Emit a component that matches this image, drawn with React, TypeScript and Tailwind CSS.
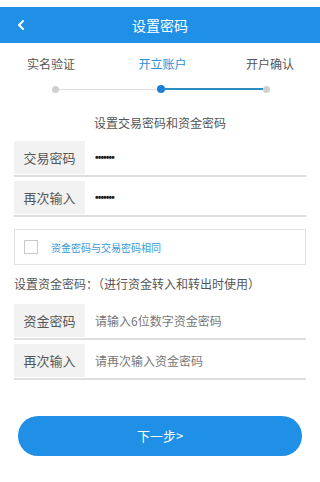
import { ChevronLeft } from 'lucide-react';

const font = { fontFamily: '"Noto Sans CJK SC", "Noto Sans", sans-serif' };

function Field({ label, value, placeholder }: { label: string; value?: string; placeholder?: string }) {
  return (
    <div className="flex items-stretch border-b-2 border-[#dedede] pb-[1px]">
      <div className="w-[71px] h-[33px] bg-[#f2f2f2] flex items-center justify-center text-[13px] text-[#555]">
        {label}
      </div>
      <div className="flex-1 flex items-center pl-[10px] text-[12px]">
        {value ? (
          <span className="text-[#222] text-[10px] tracking-[-0.8px] font-bold" style={{ fontFamily: '"Liberation Sans", sans-serif' }}>
            {value}
          </span>
        ) : (
          <span className="text-[#777]">{placeholder}</span>
        )}
      </div>
    </div>
  );
}

export default function App() {
  return (
    <div className="w-[320px] h-[482px] bg-white flex flex-col overflow-hidden" style={font}>
      {/* Header */}
      <div className="mt-[7px] h-[36px] bg-[#1f90e6] flex items-center relative shrink-0">
        <ChevronLeft size={16} strokeWidth={3} className="text-white ml-[13px]" />
        <div className="absolute inset-0 flex items-center justify-center text-white text-[14px]">设置密码</div>
      </div>

      {/* Steps */}
      <div className="flex justify-between px-[27px] mt-[12px] text-[12px] text-[#555]">
        <span>实名验证</span>
        <span className="text-[#2a8fd6] ml-[4px]">开立账户</span>
        <span className="-mr-[1px]">开户确认</span>
      </div>
      <div className="flex items-center mt-[12px] pl-[52px] pr-[50px]">
        <div className="w-[7px] h-[7px] rounded-full bg-[#cfcfcf]" />
        <div className="flex-1 h-[1px] bg-[#dddddd]" />
        <div className="w-[8px] h-[8px] rounded-full bg-[#1c7fd6]" />
        <div className="flex-1 h-[2px] bg-[#2b8fc2]" />
        <div className="w-[7px] h-[7px] rounded-full bg-[#cfcfcf]" />
      </div>

      <div className="text-center text-[12px] text-[#555] mt-[21px]">设置交易密码和资金密码</div>

      <div className="mx-[14px] mt-[9px] flex flex-col gap-[4px]">
        <Field label="交易密码" value="•••••••" />
        <Field label="再次输入" value="•••••••" />
      </div>

      <div className="mx-[14px] mt-[12px] h-[36px] border border-[#e3e3e3] flex items-center pl-[9px]">
        <div className="w-[14px] h-[14px] border border-[#c8c8c8] bg-white" />
        <span className="ml-[13px] text-[10px] text-[#3b9ad6]">资金密码与交易密码相同</span>
      </div>

      <div className="mx-[14px] mt-[10px] text-[12px] text-[#555]">设置资金密码：（进行资金转入和转出时使用）</div>

      <div className="mx-[14px] mt-[11px] flex flex-col gap-[4px]">
        <Field label="资金密码" placeholder="请输入6位数字资金密码" />
        <Field label="再次输入" placeholder="请再次输入资金密码" />
      </div>

      <button className="mx-[18px] mt-[36px] h-[40px] rounded-full bg-[#1f90e6] text-white text-[13px] flex items-center justify-center">
        下一步&gt;
      </button>
    </div>
  );
}
